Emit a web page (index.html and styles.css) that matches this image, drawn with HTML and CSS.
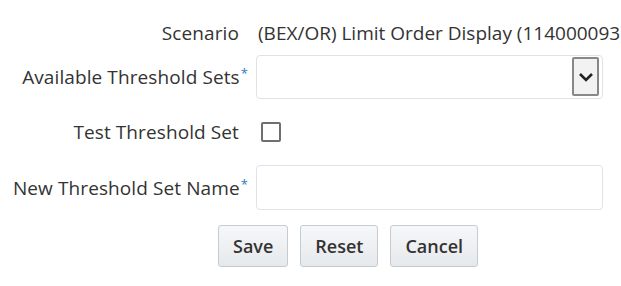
FILE: index.html
```html
<html>
	<head>
		<meta name="viewport" content="width=device-width, initial-scale=1">
		<title>Threshold Set</title>
		<link rel="stylesheet" href="styles.css">
	</head>
	<body>
		<div class="form">
			<div class="label plain">Scenario</div>
			<div class="value">(BEX/OR) Limit Order Display (114000093)</div>

			<div class="label">Available Threshold Sets<span class="req">*</span></div>
			<div class="select">
				<div class="select-text"></div>
				<div class="select-btn">
					<svg width="16" height="10" viewBox="0 0 16 10"><path d="M2 2 L8 8 L14 2" fill="none" stroke="#222" stroke-width="2.6"/></svg>
				</div>
			</div>

			<div class="label plain">Test Threshold Set</div>
			<div><span class="check"></span></div>

			<div class="label">New Threshold Set Name<span class="req">*</span></div>
			<div class="text-input"></div>
		</div>
		<div class="buttons">
			<button class="btn">Save</button>
			<button class="btn">Reset</button>
			<button class="btn">Cancel</button>
		</div>
	</body>
</html>
```
FILE: styles.css
```css
body {
	margin: 0;
	background: #fff;
	color: #333;
	font-family: "Open Sans", sans-serif;
	font-size: 19px;
	overflow: hidden;
}

.form {
	display: grid;
	grid-template-columns: 248px 347px;
	grid-template-rows: 22px 44px 44px 45px;
	column-gap: 8px;
	row-gap: 11px;
	align-items: center;
	padding-top: 22px;
}

.label {
	text-align: right;
	white-space: nowrap;
	letter-spacing: 0.1px;
}

.plain {
	padding-right: 9px;
}

.req {
	color: #2a7bc0;
	font-size: 13px;
	vertical-align: top;
	margin-left: 1px;
}

.value {
	white-space: nowrap;
	margin-left: 2px;
	line-height: 22px;
}

.select {
	display: flex;
	height: 44px;
	box-sizing: border-box;
	border: 1px solid #dde3e9;
	border-radius: 4px;
	padding: 1px 3px 2px 0;
}

.select-text {
	flex: 1;
}

.select-btn {
	width: 27px;
	display: flex;
	align-items: center;
	justify-content: center;
	background: #f2f2f2;
	border: 2px solid #888;
	border-radius: 2px;
	box-sizing: border-box;
}

.check {
	display: block;
	width: 20px;
	height: 20px;
	box-sizing: border-box;
	border: 2px solid #6f6f6f;
	border-radius: 2px;
	margin-left: 5px;
}

.text-input {
	height: 45px;
	box-sizing: border-box;
	border: 1px solid #dde3e9;
	border-radius: 4px;
}

.buttons {
	display: flex;
	gap: 12px;
	padding-left: 218px;
	margin-top: 15px;
}

.btn {
	height: 42px;
	padding: 0 14px;
	font-family: "Open Sans", sans-serif;
	font-size: 18px;
	font-weight: 600;
	color: #333;
	background: linear-gradient(#f6f7f8, #e6e9ec);
	border: 1px solid #c3cbd3;
	border-radius: 3px;
}
```
